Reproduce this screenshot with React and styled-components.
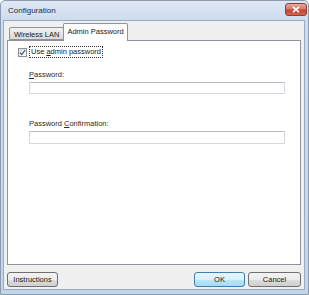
import styled, { createGlobalStyle } from "styled-components";

const GlobalStyle = createGlobalStyle`
  html, body {
    margin: 0;
    padding: 0;
    background: #ffffff;
  }
  body {
    font-family: "Liberation Sans", Arial, sans-serif;
  }
`;

const Window = styled.div`
  box-sizing: border-box;
  width: 309px;
  height: 295px;
  display: flex;
  flex-direction: column;
  border: 1px solid #8c9bb0;
  border-radius: 5px 5px 0 0;
  background: linear-gradient(#dfe8f5 0px, #cddcef 20px, #c4d5eb 100%);
  padding: 0 3px 4px 2px;
`;

const TitleBar = styled.div`
  height: 19px;
  display: flex;
  align-items: center;
  justify-content: space-between;
  padding: 0 0 0 5px;
  margin-right: -2px;
`;

const Title = styled.span`
  font-size: 8px;
  color: #1e2a3a;
`;

const CloseButton = styled.div`
  box-sizing: border-box;
  width: 22px;
  height: 13px;
  margin-top: -2px;
  border: 1px solid #8a3f35;
  border-radius: 3px;
  background: linear-gradient(#e9a99c 0%, #d9796a 45%, #c4452f 55%, #d1634c 100%);
  display: flex;
  align-items: center;
  justify-content: center;
`;

const Client = styled.div`
  flex: 1;
  display: flex;
  flex-direction: column;
  background: #f0f0f0;
  border: 1px solid #9aaabe;
  padding: 2px 3px 2px 3px;
  font-size: 7.5px;
  color: #1a1a1a;
`;

const TabStrip = styled.div`
  display: flex;
  align-items: flex-end;
  height: 17px;
  padding-left: 1px;
`;

const Tab = styled.div`
  box-sizing: border-box;
  height: ${(p) => (p.$active ? "18px" : "13px")};
  padding: 0 ${(p) => (p.$active ? "3px" : "4px")};
  margin-left: ${(p) => (p.$active ? "-1px" : "1px")};
  margin-bottom: ${(p) => (p.$active ? "-1px" : "0")};
  display: flex;
  align-items: center;
  border: 1px solid #8e939c;
  border-bottom: ${(p) => (p.$active ? "none" : "1px solid #8e939c")};
  border-radius: 2px 2px 0 0;
  background: ${(p) =>
    p.$active ? "#ffffff" : "linear-gradient(#f3f3f3, #e6e6e6 50%, #d9d9d9)"};
  position: relative;
  z-index: ${(p) => (p.$active ? 1 : 0)};
  padding-top: ${(p) => (p.$active ? "0" : "1px")};
  ${(p) => p.$active && "padding-bottom: 3px;"}
`;

const Panel = styled.div`
  flex: 1;
  background: #ffffff;
  border: 1px solid #8e939c;
  padding: 5px 15px 0 10px;
  display: flex;
  flex-direction: column;
`;

const CheckRow = styled.div`
  display: flex;
  align-items: center;
  gap: 2px;
`;

const CheckBox = styled.div`
  box-sizing: border-box;
  width: 9px;
  height: 9px;
  border: 1px solid #8f8f8f;
  background: linear-gradient(135deg, #dcdcdc, #ffffff);
  display: flex;
  align-items: center;
  justify-content: center;
`;

const FocusLabel = styled.span`
  border: 1px dotted #333;
  padding: 1px 1px;
  line-height: 8px;
`;

const Field = styled.div`
  display: flex;
  flex-direction: column;
  margin-left: 11px;
  margin-top: ${(p) => p.$top}px;
  gap: 3px;
`;

const FieldLabel = styled.label`
  line-height: 9px;
  color: #2a2a2a;
`;

const Input = styled.div`
  box-sizing: border-box;
  height: ${(p) => p.$h}px;
  border: 1px solid #d5d9df;
  border-top-color: #b9bdc4;
  background: #ffffff;
`;

const Footer = styled.div`
  display: flex;
  align-items: center;
  margin-top: 7px;
  height: 15px;
`;

const Spacer = styled.div`
  flex: 1;
`;

const Button = styled.div`
  box-sizing: border-box;
  width: ${(p) => p.$w}px;
  height: 15px;
  margin-left: ${(p) => p.$ml || 0}px;
  display: flex;
  align-items: center;
  justify-content: center;
  border: 1px solid ${(p) => (p.$default ? "#3c7fb1" : "#707070")};
  border-radius: 3px;
  background: ${(p) =>
    p.$default
      ? "linear-gradient(#eaf6fd, #d9f0fc 50%, #bee6fd 51%, #a7d9f5)"
      : "linear-gradient(#f2f2f2, #ebebeb 50%, #dddddd 51%, #cfcfcf)"};
  color: #1a1a1a;
`;

const U = styled.span`
  text-decoration: underline;
`;

export default function App() {
  return (
    <>
      <GlobalStyle />
      <Window>
        <TitleBar>
          <Title>Configuration</Title>
          <CloseButton>
            <svg width="8" height="7" viewBox="0 0 8 7">
              <path d="M1 0.8 L7 6.2 M7 0.8 L1 6.2" stroke="#ffffff" strokeWidth="1.6" />
            </svg>
          </CloseButton>
        </TitleBar>
        <Client>
          <TabStrip>
            <Tab>Wireless LAN</Tab>
            <Tab $active>Admin Password</Tab>
          </TabStrip>
          <Panel>
            <CheckRow>
              <CheckBox>
                <svg width="7" height="7" viewBox="0 0 7 7">
                  <path d="M1 3.6 L2.8 5.6 L6.2 1" fill="none" stroke="#3b5278" strokeWidth="1.2" />
                </svg>
              </CheckBox>
              <FocusLabel>
                Use <U>a</U>dmin password
              </FocusLabel>
            </CheckRow>
            <Field $top={12}>
              <FieldLabel>
                <U>P</U>assword:
              </FieldLabel>
              <Input $h={12} />
            </Field>
            <Field $top={25}>
              <FieldLabel>
                Password <U>C</U>onfirmation:
              </FieldLabel>
              <Input $h={13} />
            </Field>
          </Panel>
          <Footer>
            <Button $w={51}>Instructions</Button>
            <Spacer />
            <Button $w={51} $default>
              OK
            </Button>
            <Button $w={53} $ml={3}>
              Cancel
            </Button>
          </Footer>
        </Client>
      </Window>
    </>
  );
}
